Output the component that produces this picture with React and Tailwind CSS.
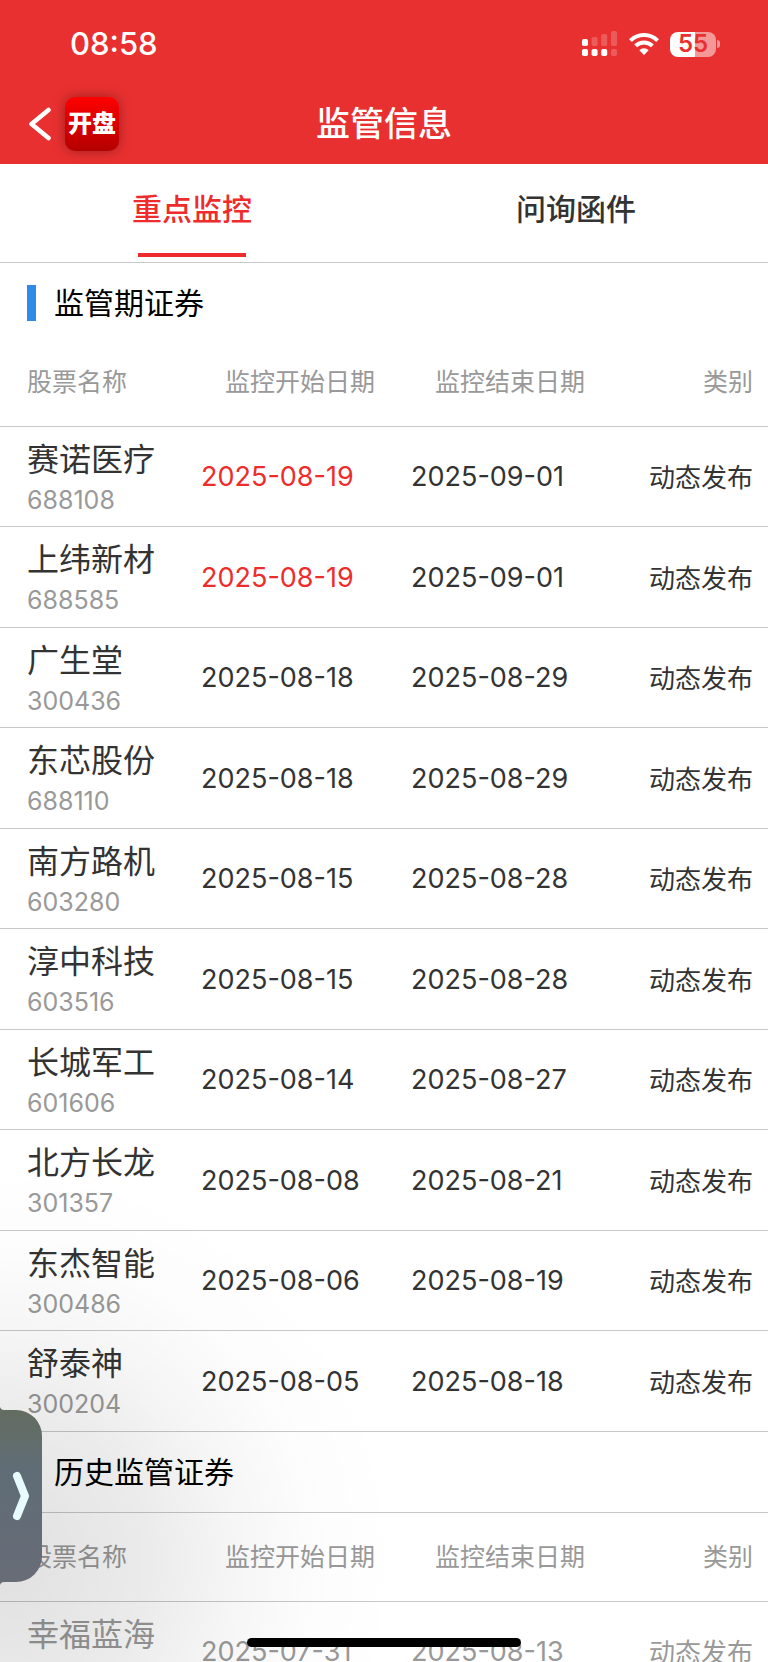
import clsx from 'clsx'

const monitored = [
  { name: '赛诺医疗', code: '688108', start: '2025-08-19', end: '2025-09-01', type: '动态发布', isNew: true },
  { name: '上纬新材', code: '688585', start: '2025-08-19', end: '2025-09-01', type: '动态发布', isNew: true },
  { name: '广生堂', code: '300436', start: '2025-08-18', end: '2025-08-29', type: '动态发布' },
  { name: '东芯股份', code: '688110', start: '2025-08-18', end: '2025-08-29', type: '动态发布' },
  { name: '南方路机', code: '603280', start: '2025-08-15', end: '2025-08-28', type: '动态发布' },
  { name: '淳中科技', code: '603516', start: '2025-08-15', end: '2025-08-28', type: '动态发布' },
  { name: '长城军工', code: '601606', start: '2025-08-14', end: '2025-08-27', type: '动态发布' },
  { name: '北方长龙', code: '301357', start: '2025-08-08', end: '2025-08-21', type: '动态发布' },
  { name: '东杰智能', code: '300486', start: '2025-08-06', end: '2025-08-19', type: '动态发布' },
  { name: '舒泰神', code: '300204', start: '2025-08-05', end: '2025-08-18', type: '动态发布' },
]

const history = [
  { name: '幸福蓝海', code: '300528', start: '2025-07-31', end: '2025-08-13', type: '动态发布' },
]

function SignalIcon() {
  return (
    <svg width="36" height="26" viewBox="0 0 36 26" fill="#fff" aria-hidden="true">
      <rect x="0" y="8" width="6" height="7" rx="1.8" />
      <g opacity="0.2">
        <rect x="9.6" y="6" width="6" height="9" rx="1.8" />
        <rect x="19.2" y="3" width="6" height="12" rx="1.8" />
        <rect x="29" y="0" width="6" height="15" rx="1.8" />
        <rect x="29" y="18" width="6" height="7" rx="1.8" />
      </g>
      <rect x="0" y="18" width="6" height="7" rx="1.8" />
      <rect x="9.6" y="18" width="6" height="7" rx="1.8" />
      <rect x="19.2" y="18" width="6" height="7" rx="1.8" />
    </svg>
  )
}

function WifiIcon() {
  return (
    <svg width="30" height="22" viewBox="0 0 30 22" fill="none" stroke="#fff" strokeWidth="4" aria-hidden="true">
      <path d="M1.4 7.6a19.3 19.3 0 0 1 27.2 0" />
      <path d="M6.6 12.9a12 12 0 0 1 16.8 0" />
      <path d="M15 22l-4.7-4.8a6.7 6.7 0 0 1 9.4 0z" fill="#fff" stroke="none" />
    </svg>
  )
}

function Battery() {
  return (
    <div className="flex items-center gap-px">
      <div className="flex h-[25px] w-[46px] items-center justify-center rounded-lg bg-linear-to-r from-white from-55% to-white/50 to-55% text-2xl font-semibold text-[#e93030]">
        55
      </div>
      <div className="h-2 w-[3px] rounded-r-full bg-white/50" />
    </div>
  )
}

function SectionTitle({ children, className }) {
  return (
    <div className={clsx('flex items-center gap-[18px] pl-[27px] pt-[22px]', className)}>
      <span className="h-9 w-[9px] bg-[#2f8ae8]" />
      <h2 className="text-[30px] leading-9 text-black">{children}</h2>
    </div>
  )
}

function StockTable({ rows, muted }) {
  return (
    <table className="w-full table-fixed border-separate border-spacing-0 text-left">
      <thead>
        <tr className="h-[89px] text-[25px] text-[#999] *:border-b *:border-[#c8c8c8] *:p-0 *:pt-[2px] *:font-normal">
          <th className="w-[201px]"><span className="pl-[27px]">股票名称</span></th>
          <th className="w-[210px]"><span className="pl-6">监控开始日期</span></th>
          <th><span className="pl-6">监控结束日期</span></th>
          <th className="w-[140px] text-right"><span className="pr-[15px]">类别</span></th>
        </tr>
      </thead>
      <tbody>
        {rows.map(r => (
          <tr
            key={r.code}
            className={clsx(
              'h-[100px] text-[26px] even:h-[101px] *:border-b *:border-[#c8c8c8] *:p-0 *:pt-[2px]',
              muted ? 'text-[#999]' : 'text-[#333]'
            )}
          >
            <td>
              <div className="pl-[27px] text-[32px] leading-[44px]">{r.name}</div>
              <div className="pl-[27px] text-[25px] leading-9 text-[#999]">{r.code}</div>
            </td>
            <td className={clsx('text-[27px]', r.isNew && 'text-[#ee2c2c]')}>{r.start}</td>
            <td className="text-[27px]">{r.end}</td>
            <td className="text-right"><span className="pr-[15px]">{r.type}</span></td>
          </tr>
        ))}
      </tbody>
    </table>
  )
}

export default function App() {
  return (
    <div className="relative h-screen overflow-hidden bg-white font-['Inter','Noto_Sans_CJK_SC',sans-serif]">
      <header className="bg-[#e93030] text-white">
        <div className="flex h-[82px] items-center justify-between pl-[70px] pr-[48px] pt-[6px]">
          <span className="text-[31px] font-medium">08:58</span>
          <div className="flex items-center gap-[11px]">
            <SignalIcon />
            <WifiIcon />
            <Battery />
          </div>
        </div>
        <div className="grid h-[82px] grid-cols-[1fr_auto_1fr] items-center pt-px">
          <div className="flex items-center gap-[13px] pl-7">
            <button type="button" aria-label="返回">
              <svg width="24" height="34" viewBox="0 0 24 34" fill="none" stroke="#fff" strokeWidth="4.5" strokeLinecap="round" strokeLinejoin="round">
                <path d="M20.5 3L3.5 17l17 14" />
              </svg>
            </button>
            <div className="flex size-[54px] items-center justify-center rounded-[10px] bg-linear-to-b from-[#ff0000] to-[#b40000] text-2xl font-black shadow-[0_0_12px_rgba(0,0,0,0.35)]">
              开盘
            </div>
          </div>
          <h1 className="text-[34px] font-medium">监管信息</h1>
        </div>
      </header>

      <nav className="grid h-[99px] grid-cols-2 border-b border-[#c8c8c8] text-[30px] font-medium">
        <button type="button" className="flex flex-col items-center justify-between pb-[5px] pt-[23px] text-[#ee2c2c]">
          <span className="leading-[44px]">重点监控</span>
          <span className="h-1 w-[108px] bg-[#ee2c2c]" />
        </button>
        <button type="button" className="flex flex-col items-center pt-[23px] text-[#333]">
          <span className="leading-[44px]">问询函件</span>
        </button>
      </nav>

      <main>
        <SectionTitle className="pb-[17px]">监管期证券</SectionTitle>
        <StockTable rows={monitored} />
        <SectionTitle className="border-b border-[#c8c8c8] pb-[22px]">历史监管证券</SectionTitle>
        <StockTable rows={history} muted />
      </main>

      {/* side drawer handle with its soft shadow */}
      <div className="pointer-events-none absolute -bottom-[300px] -left-[400px] size-[800px] bg-[radial-gradient(circle,rgba(0,0,0,0.12)_0,rgba(0,0,0,0.08)_150px,rgba(0,0,0,0.04)_230px,rgba(0,0,0,0.012)_310px,transparent_400px)]" />
      <button
        type="button"
        aria-label="展开"
        className="absolute bottom-20 left-0 flex h-[172px] w-[42px] items-center justify-center rounded-r-[26px] bg-linear-to-b from-[#646c60] via-[#5f6d76] via-35% to-[#686c77]"
      >
        <svg className="absolute -top-[3px] left-0" width="4" height="3" viewBox="0 0 4 3" aria-hidden="true">
          <path d="M0 0q1 3 4 3H0z" fill="#646c60" />
        </svg>
        <svg width="18" height="50" viewBox="0 0 18 50" fill="none" stroke="#e8fbff" strokeWidth="8" strokeLinecap="round" strokeLinejoin="round">
          <path d="M5 5l8 20-8 20" />
        </svg>
        <svg className="absolute -bottom-[3px] left-0" width="4" height="3" viewBox="0 0 4 3" aria-hidden="true">
          <path d="M0 3q1-3 4-3H0z" fill="#686c77" />
        </svg>
      </button>

      <div className="absolute bottom-[15px] left-1/2 h-[9px] w-[274px] -translate-x-1/2 rounded-full bg-black" />
    </div>
  )
}
